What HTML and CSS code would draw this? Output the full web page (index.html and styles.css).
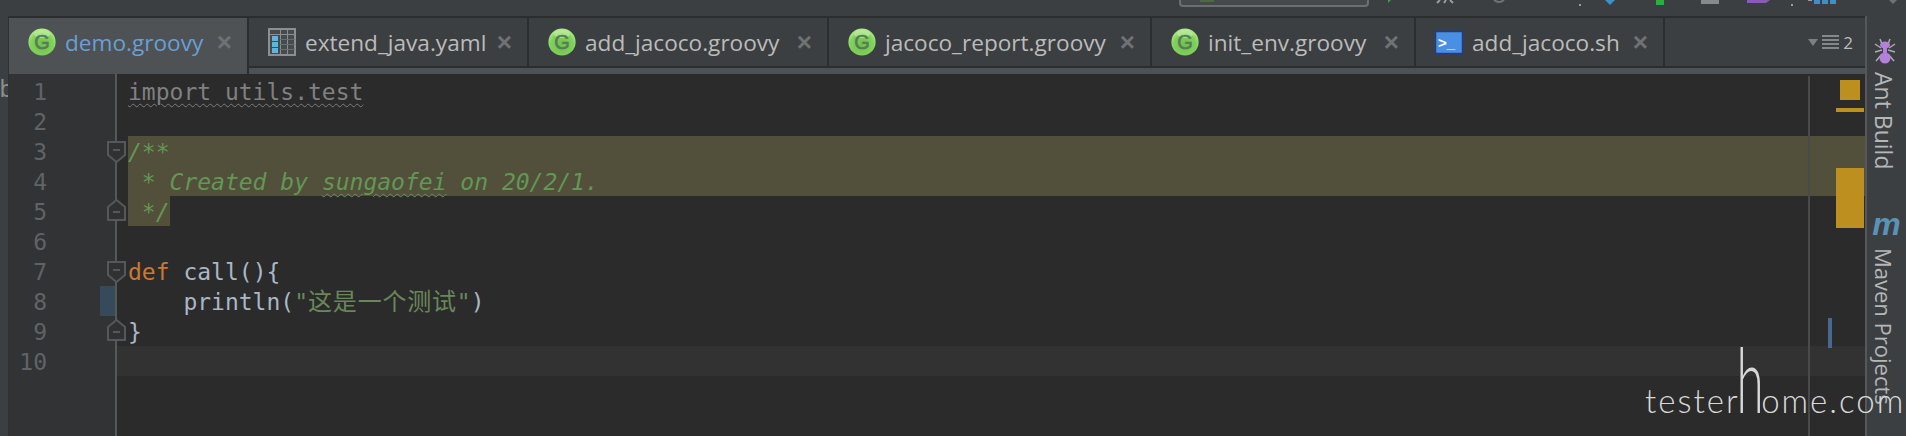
FILE: index.html
```html
<!DOCTYPE html>
<html lang="en">
<head>
<meta charset="utf-8">
<title>demo.groovy</title>
<link rel="stylesheet" href="styles.css">
</head>
<body>
<svg class="defs" width="0" height="0" aria-hidden="true">
  <defs>
    <radialGradient id="gball" cx="50%" cy="62%" r="60%">
      <stop offset="0" stop-color="#6fbf4c"/>
      <stop offset="0.7" stop-color="#7fd35a"/>
      <stop offset="1" stop-color="#b4ec8e"/>
    </radialGradient>
    <symbol id="groovy" viewBox="0 0 28 28">
      <circle cx="14" cy="14" r="13.6" fill="url(#gball)"/>
      <ellipse cx="14" cy="6" rx="8" ry="4" fill="#c9f3ae" opacity=".55"/>
      <text x="14" y="21" text-anchor="middle" font-family="Liberation Sans" font-size="20" font-weight="400" stroke="#5b7a58" stroke-width=".6" fill="#5b7a58">G</text>
    </symbol>
  </defs>
</svg>
<div class="app">
  <svg class="toolbar" width="1906" height="16" viewBox="0 0 1906 16" aria-hidden="true">
    <path d="M1180 0v3q0 3 3 3h182q3 0 3-3V0" fill="#45494b" stroke="#6c6f71" stroke-width="2"/>
    <rect x="1200" y="0" width="14" height="2" fill="#4d6b3f"/>
    <path d="M1388 3l3-3h-3z" fill="#3aa53f"/>
    <path d="M1437 3l3-3M1444 3l2-3M1450 0l3 3" stroke="#9a9c9e" stroke-width="2" fill="none"/>
    <path d="M1494 0q5 4 10 0" stroke="#707375" stroke-width="2" fill="none"/>
    <rect x="1579" y="4" width="2" height="2" fill="#9a9c9e"/>
    <path d="M1605 0h10l-5 5z" fill="#3d8fc9"/>
    <rect x="1656" y="0" width="8" height="5" fill="#2fae3f"/>
    <rect x="1701" y="0" width="18" height="4" fill="#88898b"/>
    <path d="M1747 0h23l-4 3h-19z" fill="#8a5bb5"/>
    <rect x="1791" y="4" width="2" height="2" fill="#9a9c9e"/>
    <rect x="1808" y="0" width="4" height="1" fill="#9a9c9e"/>
    <rect x="1814" y="0" width="6" height="4" fill="#3d8fc9"/>
    <rect x="1822" y="0" width="6" height="4" fill="#3d8fc9"/>
    <rect x="1830" y="0" width="6" height="4" fill="#3d8fc9"/>
    <path d="M1889 0h8l-4 4z" fill="#6f7274"/>
  </svg>
  <div class="workspace">
    <div class="left-strip">
      <span class="clip-char">b</span>
    </div>
    <div class="center">
      <div class="tabs">
        <div class="tab tab-active">
          <svg class="tab-icon"><use href="#groovy"/></svg>
          <span class="tab-name">demo.groovy</span>
          <span class="tab-close">×</span>
        </div>
        <div class="tab">
          <svg class="tab-icon" viewBox="0 0 28 28">
            <rect x="1" y="1" width="26" height="26" fill="#484b4d" stroke="#8c8f91" stroke-width="2"/>
            <path d="M1 6.500h26M12.500 1v26M19.500 1v26" stroke="#8c8f91" stroke-width="1" fill="none"/>
            <path d="M12 11.500h15M12 16.500h15M12 21.500h15" stroke="#6a6d6f" stroke-width="1" fill="none"/>
            <rect x="4" y="8" width="6" height="5" fill="#62b4de"/>
            <rect x="4" y="14" width="6" height="5" fill="#62b4de"/>
            <rect x="4" y="20" width="6" height="5" fill="#62b4de"/>
          </svg>
          <span class="tab-name">extend_java.yaml</span>
          <span class="tab-close">×</span>
        </div>
        <div class="tab">
          <svg class="tab-icon"><use href="#groovy"/></svg>
          <span class="tab-name">add_jacoco.groovy</span>
          <span class="tab-close">×</span>
        </div>
        <div class="tab">
          <svg class="tab-icon"><use href="#groovy"/></svg>
          <span class="tab-name">jacoco_report.groovy</span>
          <span class="tab-close">×</span>
        </div>
        <div class="tab">
          <svg class="tab-icon"><use href="#groovy"/></svg>
          <span class="tab-name">init_env.groovy</span>
          <span class="tab-close">×</span>
        </div>
        <div class="tab">
          <svg class="tab-icon" viewBox="0 0 28 28">
            <rect x="0.500" y="3.500" width="27" height="22" fill="#4a90e2" stroke="#1d3a99" stroke-width="1.500"/>
            <text x="3" y="20" font-family="Liberation Sans" font-size="15" font-weight="700" fill="#fff">&gt;_</text>
          </svg>
          <span class="tab-name">add_jacoco.sh</span>
          <span class="tab-close">×</span>
        </div>
        <div class="tab-overflow">
          <svg width="32" height="14" viewBox="0 0 32 14" aria-hidden="true">
            <path d="M0 4h10l-5 7z" fill="#7d8082"/>
            <path d="M14 1h17M14 5h17M14 9h17M14 13h17" stroke="#85888a" stroke-width="2"/>
          </svg>
          <span class="overflow-count">2</span>
        </div>
      </div>
      <div class="tab-underline"></div>
      <div class="editor">
        <div class="gutter">
          <div class="gutter-row">1</div>
          <div class="gutter-row">2</div>
          <div class="gutter-row">3<svg class="fold" viewBox="0 0 19 22"><path d="M1 1h17v13l-8.500 7L1 14z" fill="#2f3133" stroke="#555759" stroke-width="2"/><path d="M6 9h7" stroke="#555759" stroke-width="2"/></svg></div>
          <div class="gutter-row">4</div>
          <div class="gutter-row">5<svg class="fold fold-end" viewBox="0 0 19 22"><path d="M1 21h17V8L9.500 1 1 8z" fill="#2f3133" stroke="#555759" stroke-width="2"/><path d="M6 13h7" stroke="#555759" stroke-width="2"/></svg></div>
          <div class="gutter-row">6</div>
          <div class="gutter-row">7<svg class="fold" viewBox="0 0 19 22"><path d="M1 1h17v13l-8.500 7L1 14z" fill="#2f3133" stroke="#555759" stroke-width="2"/><path d="M6 9h7" stroke="#555759" stroke-width="2"/></svg></div>
          <div class="gutter-row">8<span class="change-mark"></span></div>
          <div class="gutter-row">9<svg class="fold fold-end" viewBox="0 0 19 22"><path d="M1 21h17V8L9.500 1 1 8z" fill="#2f3133" stroke="#555759" stroke-width="2"/><path d="M6 13h7" stroke="#555759" stroke-width="2"/></svg></div>
          <div class="gutter-row">10</div>
        </div>
        <div class="code">
          <div class="line"><span class="unused">import utils.test</span></div>
          <div class="line"></div>
          <div class="line line-hl"><span class="comment">/**</span></div>
          <div class="line line-hl"><span class="comment"> * Created by <span class="typo">sungaofei</span> on 20/2/1.</span></div>
          <div class="line"><span class="comment hl-inline"> */</span></div>
          <div class="line"></div>
          <div class="line"><span class="keyword">def</span> call(){</div>
          <div class="line">    println(<span class="string">"<span class="cjk">这是一个测试</span>"</span>)</div>
          <div class="line">}</div>
          <div class="line line-current"></div>
          <span class="margin-line"></span>
          <span class="mark mark-ok"></span>
          <span class="mark mark-bar"></span>
          <span class="mark mark-big"></span>
          <span class="mark mark-change"></span>
        </div>
      </div>
    </div>
    <div class="stripe">
      <svg class="ant" width="22" height="26" viewBox="0 0 22 26" aria-hidden="true">
        <path d="M6 1l2 5M16 1l-2 5M1 6l6 4M21 6l-6 4M1 14l7-2M21 14l-7-2M2 23l6-7M20 23l-6-7" stroke="#a9acae" stroke-width="1.500" fill="none"/>
        <ellipse cx="11" cy="7" rx="5" ry="3.500" fill="#b57fdc"/>
        <rect x="9" y="9" width="4" height="7" fill="#b57fdc"/>
        <ellipse cx="11" cy="20" rx="5.500" ry="5.500" fill="#b57fdc"/>
      </svg>
      <span class="stripe-label">Ant Build</span>
      <span class="maven-m">m</span>
      <span class="stripe-label stripe-label-long">Maven Projects</span>
    </div>
  </div>
  <div class="watermark">tester<span class="wm-h">h</span>ome.com</div>
</div>
</body>
</html>
```

FILE: styles.css
```css
* { box-sizing: border-box; }

html, body {
  margin: 0;
  padding: 0;
  width: 1906px;
  height: 436px;
  overflow: hidden;
  background: #3c3f41;
}

.defs { position: absolute; }

.app {
  position: relative;
  width: 1906px;
  height: 436px;
  display: flex;
  flex-direction: column;
  overflow: hidden;
}

.toolbar { display: block; flex: none; }

.workspace {
  flex: 1;
  display: flex;
  min-height: 0;
}

.left-strip {
  width: 9px;
  flex: none;
  padding-top: 58px;
  border-right: 1px solid #2f3032;
  overflow: hidden;
  display: flex;
  flex-direction: column;
  align-items: flex-end;
}

.clip-char {
  font: 23px/30px "DejaVu Sans Mono", monospace;
  color: #8b8d8f;
  margin-right: -5px;
}

.center {
  flex: 1;
  min-width: 0;
  display: flex;
  flex-direction: column;
}

.tabs {
  height: 52px;
  flex: none;
  display: grid;
  grid-template-columns: 240px 280px 300px 323px 264px 249px 1fr;
  grid-template-rows: 48px;
  border-top: 2px solid #2c2d2e;
  border-bottom: 2px solid #2c2d2e;
  font-family: "Open Sans", "Liberation Sans", sans-serif;
}

.tab {
  display: flex;
  align-items: center;
  padding-left: 19px;
  border-right: 2px solid #2c2d2e;
  color: #bbbbbb;
  font-size: 22.6px;
  position: relative;
}

.tab-active {
  background: #4e5254;
  height: 56px;
  padding-bottom: 8px;
  color: #6a9fd2;
  z-index: 1;
}

.tab-icon {
  width: 28px;
  height: 28px;
  flex: none;
  margin-right: 9px;
}

.tab-name { white-space: nowrap; }

.tab-close {
  margin-left: auto;
  margin-right: 15px;
  color: #6f7274;
  font: 700 26px/26px "Liberation Sans", sans-serif;
}

.tab-overflow {
  display: flex;
  align-items: center;
  justify-content: flex-end;
  gap: 3px;
  padding-right: 12px;
  color: #bbbbbb;
  font-size: 17px;
}

.tab-underline {
  height: 6px;
  flex: none;
  background: #4e5254;
}

.editor {
  flex: 1;
  min-height: 0;
  display: flex;
  background: #2b2b2b;
  font: 23px/32px "DejaVu Sans Mono", monospace;
}

.gutter {
  width: 108px;
  flex: none;
  padding-top: 2px;
  background: #313335;
  border-right: 2px solid #555759;
  color: #606366;
}

.gutter-row {
  position: relative;
  height: 30px;
  width: 38px;
  text-align: right;
  white-space: nowrap;
}

.fold {
  position: absolute;
  left: 98px;
  top: 5px;
  width: 19px;
  height: 22px;
  z-index: 2;
}

.fold-end { top: 3px; }

.change-mark {
  position: absolute;
  left: 91px;
  top: 0;
  width: 15px;
  height: 30px;
  background: #374a5a;
}

.code {
  position: relative;
  flex: 1;
  min-width: 0;
  padding-top: 2px;
  color: #a9b7c6;
}

.line {
  height: 30px;
  padding-left: 11px;
  white-space: pre;
}

.line-hl {
  background: linear-gradient(#52503a, #52503a) 11px 0 no-repeat;
}

.line-current { background: #323232; }

.hl-inline {
  display: inline-block;
  height: 30px;
  background: #52503a;
}

.unused {
  color: #808080;
  text-decoration: underline wavy #7c7c7c 1px;
  text-underline-offset: 3px;
}

.comment {
  color: #629755;
  font-style: italic;
}

.typo {
  text-decoration: underline wavy #6f8a68 1px;
  text-underline-offset: 3px;
}

.keyword { color: #cc7832; }

.string { color: #6a8759; }

.cjk {
  font-family: "Noto Sans CJK SC", sans-serif;
  font-size: 24px;
  line-height: 24px;
  letter-spacing: 0.8px;
}

.margin-line {
  position: absolute;
  left: 1691px;
  top: 2px;
  bottom: 0;
  width: 2px;
  background: #4a4a4a;
}

.mark {
  position: absolute;
  background: #bc8f1e;
}

.mark-ok { left: 1723px; top: 6px; width: 20px; height: 20px; }
.mark-bar { left: 1719px; top: 34px; width: 28px; height: 4px; }
.mark-big { left: 1719px; top: 94px; width: 28px; height: 60px; }
.mark-change { left: 1711px; top: 244px; width: 4px; height: 30px; background: #46698f; }

.stripe {
  width: 41px;
  flex: none;
  border-left: 2px solid #555759;
  display: flex;
  flex-direction: column;
  align-items: center;
  padding-top: 22px;
  overflow: hidden;
  font-family: "Open Sans", "Liberation Sans", sans-serif;
}

.ant { flex: none; margin-right: 4px; }

.stripe-label {
  writing-mode: vertical-rl;
  color: #b4b6b8;
  font-size: 23px;
  line-height: 24px;
  margin-right: 6px;
  white-space: nowrap;
}

.stripe-label-long { font-size: 22px; }

.ant + .stripe-label { margin-top: 8px; }

.maven-m {
  margin-top: 42px;
  height: 37px;
  color: #5b93b8;
  font: italic 700 32px/26px "Liberation Sans", sans-serif;
}

.watermark {
  position: absolute;
  left: 1645px;
  top: 358px;
  color: #d8d8d8;
  font: 300 33px/40px "Lato", sans-serif;
  letter-spacing: 2px;
  white-space: nowrap;
}

.wm-h {
  display: inline-block;
  font-size: 90px;
  line-height: 40px;
  font-weight: 300;
  transform: scaleX(0.55);
  transform-origin: 50% 100%;
  margin: 0 -15px;
}
```
